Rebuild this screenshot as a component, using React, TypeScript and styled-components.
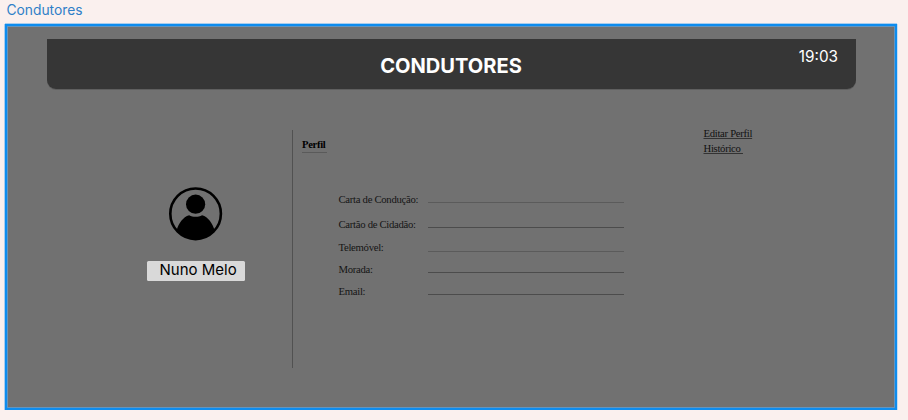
import React from "react";
import styled, { createGlobalStyle } from "styled-components";

const GlobalStyle = createGlobalStyle`
  * { box-sizing: border-box; }
  body { margin: 0; background: #faf0ee; }
`;

const serif = `"Liberation Serif", "Times New Roman", serif`;
const sans = `Inter, "Liberation Sans", sans-serif`;

const Canvas = styled.div`
  width: 908px;
  height: 420px;
  overflow: hidden;
  background: #faf0ee;
  font-family: ${sans};
`;

const FrameLabel = styled.div`
  height: 24px;
  padding: 1px 0 0 6.5px;
  font-size: 13.8px;
  line-height: 18px;
  color: #2f80c8;
`;

const Frame = styled.main`
  width: 892px;
  height: 386px;
  margin-left: 5px;
  border: 2px solid #0d8cee;
  background: #717171;
  box-shadow: 0 -1px 0 #a9cdee, -1px 0 0 #a9cdee, 1px 0 0 #c5dcf0,
    inset 0 0 0 1px #6494bd;
`;

const Header = styled.header`
  display: grid;
  grid-template-columns: 1fr auto 1fr;
  width: 809px;
  height: 50px;
  margin: 13px 0 0 40px;
  padding: 0 18px 0 0;
  border-radius: 0 0 9px 9px;
  background: #363636;
  box-shadow: 0 1px 0 #5f5f5f;
  color: #fff;
`;

const Title = styled.h1`
  grid-column: 2;
  margin: 14px 0 0 17px;
  font-size: 20.1px;
  line-height: 26px;
  font-weight: 700;
`;

const Clock = styled.time`
  justify-self: end;
  margin-top: 8px;
  font-size: 15.3px;
  line-height: 20px;
`;

const Body = styled.div`
  display: grid;
  grid-template-columns: 285px 411px 1fr;
  height: 238px;
  margin-top: 41px;
`;

const ProfileCard = styled.section`
  display: flex;
  flex-direction: column;
  align-items: flex-start;
  padding: 57px 0 0 139.5px;
`;

const Avatar = styled.svg`
  width: 54px;
  height: 54px;
  margin-left: 22px;
`;

const NameTag = styled.div`
  width: 98px;
  height: 19.5px;
  margin-top: 20px;
  padding-left: 13px;
  border-radius: 1.5px;
  background: #d9d9d9;
  color: #000;
  font-size: 15px;
  line-height: 18px;
  white-space: nowrap;
`;

const Details = styled.section`
  border-left: 1px solid #515151;
  font-family: ${serif};
  color: #151515;
`;

const SectionTitle = styled.h2`
  width: 25px;
  height: 16px;
  margin: 7px 0 0 9px;
  padding-top: 1px;
  border-bottom: 1px solid #5a5a5a;
  color: #000;
  font-size: 10.6px;
  line-height: 14px;
  letter-spacing: -0.3px;
  font-weight: 700;
`;

const Fields = styled.dl`
  display: flex;
  flex-direction: column;
  margin: 39px 0 0 45.5px;
`;

const Field = styled.div<{ $height: number }>`
  display: grid;
  grid-template-columns: 89px 196px;
  height: ${(p) => p.$height}px;
`;

const FieldName = styled.dt`
  font-size: 10.7px;
  line-height: 14px;
  letter-spacing: -0.29px;
  white-space: nowrap;
`;

const FieldLine = styled.dd<{ $drop: number; $faint?: boolean }>`
  height: 1px;
  margin: ${(p) => p.$drop}px 0 0;
  background: ${(p) => (p.$faint ? "#5b5b5b" : "#4c4c4c")};
`;

const Actions = styled.nav`
  display: flex;
  flex-direction: column;
  align-items: flex-start;
  margin: -4px 0 0 0.5px;
`;

const ActionLink = styled.a`
  height: 15px;
  color: #111;
  font-family: ${serif};
  font-size: 10.7px;
  line-height: 15px;
  letter-spacing: -0.3px;
  text-decoration: underline #333 1px;
  text-underline-offset: 1px;
  white-space: pre;
`;

const fields = [
  { name: "Carta de Condução:", height: 25, drop: 10, faint: true },
  { name: "Cartão de Cidadão:", height: 23, drop: 10 },
  { name: "Telemóvel:", height: 22, drop: 11, faint: true },
  { name: "Morada:", height: 22, drop: 10 },
  { name: "Email:", height: 22, drop: 10 },
];

export default function App() {
  return (
    <Canvas>
      <GlobalStyle />
      <FrameLabel>Condutores</FrameLabel>
      <Frame>
        <Header>
          <Title>CONDUTORES</Title>
          <Clock>19:03</Clock>
        </Header>
        <Body>
          <ProfileCard>
            <Avatar viewBox="0.4 0 54 54" aria-hidden="true">
              <circle cx="27" cy="26.8" r="25.3" fill="none" stroke="#000" strokeWidth="2.6" />
              <circle cx="27" cy="17.2" r="9.6" />
              <path d="M8 43.5C10 36 14.5 30 20.5 28.2C24.5 30.2 29.5 30.2 33.5 28.2C39.5 30 44 36 46 43.5A26 26 0 0 1 8 43.5Z" />
            </Avatar>
            <NameTag>Nuno Melo</NameTag>
          </ProfileCard>
          <Details>
            <SectionTitle>Perfil</SectionTitle>
            <Fields>
              {fields.map((f) => (
                <Field key={f.name} $height={f.height}>
                  <FieldName>{f.name}</FieldName>
                  <FieldLine $drop={f.drop} $faint={f.faint} />
                </Field>
              ))}
            </Fields>
          </Details>
          <Actions>
            <ActionLink>Editar Perfil</ActionLink>
            <ActionLink>{"Histórico "}</ActionLink>
          </Actions>
        </Body>
      </Frame>
    </Canvas>
  );
}
